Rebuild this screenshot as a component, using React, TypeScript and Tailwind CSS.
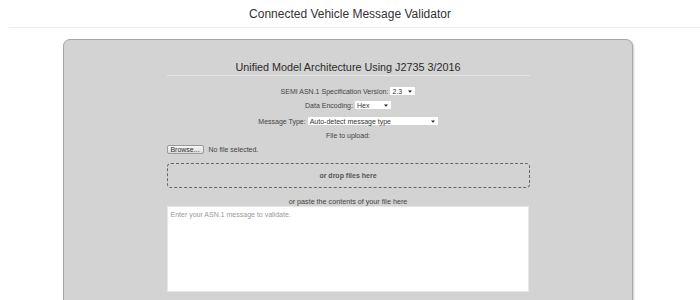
import { ReactNode } from "react";

function Caret() {
  return (
    <svg width="4" height="3" viewBox="0 0 4 3" className="shrink-0">
      <path d="M0 0.5 L4 0.5 L2 2.8 Z" fill="#222" />
    </svg>
  );
}

function FakeSelect({ value, width }: { value: string; width: string }) {
  return (
    <div
      className={`${width} h-[8px] bg-white flex items-center justify-between pl-[2px] pr-[3px] text-[7px] leading-none text-[#333]`}
    >
      <span>{value}</span>
      <Caret />
    </div>
  );
}

function Row({ label, children, className }: { label: string; children: ReactNode; className: string }) {
  return (
    <div className={`${className} h-[10px] flex items-center justify-center gap-[2px]`}>
      <span className="text-[7px] leading-none text-[#444]">{label}</span>
      {children}
    </div>
  );
}

export default function App() {
  return (
    <div className="w-[700px] h-[300px] overflow-hidden bg-white font-['Liberation_Sans',Arial,sans-serif]">
      <div className="h-[27px] flex items-center justify-center text-[12px] text-[#333]">
        Connected Vehicle Message Validator
      </div>
      <div className="ml-[9px] h-px bg-[#efefef]" />

      <div className="mt-[11px] ml-[63px] w-[570px] h-[290px] rounded-[7px] border border-[#a8a8a8] bg-[#d3d3d3] shadow-[1px_1px_2px_rgba(0,0,0,0.2)]">
        <div className="w-[363px] mx-auto">
          <div className="pt-[21px] pb-[1px] border-b border-[#e4e4e4]">
            <h2 className="h-[13px] text-[10.8px] leading-[13px] text-center text-[#2a2a2a]">
              Unified Model Architecture Using J2735 3/2016
            </h2>
          </div>

          <Row label="SEMI ASN.1 Specification Version:" className="mt-[10px]">
            <FakeSelect value="2.3" width="w-[25px]" />
          </Row>
          <Row label="Data Encoding:" className="mt-[4px]">
            <FakeSelect value="Hex" width="w-[36px]" />
          </Row>
          <Row label="Message Type:" className="mt-[6px]">
            <FakeSelect value="Auto-detect message type" width="w-[130px]" />
          </Row>

          <div className="mt-[4px] h-[10px] flex items-center justify-center text-[7px] leading-none text-[#444]">
            File to upload:
          </div>

          <div className="mt-[5px] h-[9px] flex items-center gap-[5px]">
            <button className="w-[37px] h-[9px] rounded-[2px] border border-[#9a9a9a] bg-gradient-to-b from-[#f6f6f6] to-[#dcdcdc] text-[7px] leading-none text-[#333] flex items-center justify-center">
              Browse...
            </button>
            <span className="text-[7px] leading-none text-[#444]">No file selected.</span>
          </div>

          <div className="mt-[9px] h-[25px] rounded-[4px] border border-dashed border-[#666] flex items-center justify-center">
            <span className="text-[7px] font-bold leading-none text-[#555]">or drop files here</span>
          </div>

          <div className="mt-[9px] h-[9px] flex items-center justify-center text-[7.2px] leading-none text-[#444]">
            or paste the contents of your file here
          </div>

          <textarea
            readOnly
            placeholder="Enter your ASN.1 message to validate."
            className="block w-[362px] h-[86px] resize-none border border-[#e6e6e6] bg-white px-[3px] py-[3px] text-[7px] leading-[9px] text-[#333] placeholder:text-[#9a9a9a] outline-none"
          />
        </div>
      </div>
    </div>
  );
}
